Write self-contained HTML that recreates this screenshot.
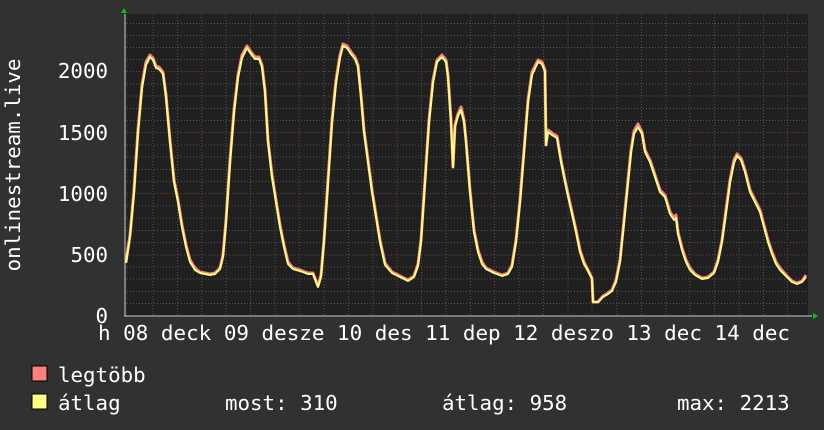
<!DOCTYPE html>
<html><head><meta charset="utf-8"><style>
html,body{margin:0;padding:0;background:#313131;}
body{width:824px;height:430px;overflow:hidden;position:relative;font-family:"DejaVu Sans Mono","Liberation Mono",monospace;color:#fff;}
svg{position:absolute;left:0;top:0}
</style></head><body>
<svg width="824" height="430" xmlns="http://www.w3.org/2000/svg" font-family="DejaVu Sans Mono, Liberation Mono, monospace">
<rect x="124" y="14" width="684" height="302" fill="#202020"/>
<rect x="124" y="14" width="3" height="302" fill="#2a2a2a"/>
<g stroke="#555" stroke-width="1" stroke-dasharray="1,2">
<path d="M153 14V316M177.5 14V316M226 14V316M250.5 14V316M275 14V316M324 14V316M348.5 14V316M373 14V316M421.5 14V316M446 14V316M470.5 14V316M519 14V316M543.5 14V316M568 14V316M617 14V316M641.5 14V316M666 14V316M714.5 14V316M739 14V316M763.5 14V316"/>
<path d="M124 23.5H808M124 35.5H808M124 47.5H808M124 59.5H808M124 84H808M124 96H808M124 108.5H808M124 120.5H808M124 145H808M124 157H808M124 169.5H808M124 181.5H808M124 206H808M124 218H808M124 230.5H808M124 242.5H808M124 267H808M124 279H808M124 291.5H808M124 303.5H808"/>
</g>
<g stroke="#7a3c3c" stroke-width="1" stroke-dasharray="1,2">
<path d="M201.7 14V316M299.3 14V316M397 14V316M494.6 14V316M592 14V316M689.8 14V316M787.4 14V316"/>
<path d="M124 71.5H808M124 132.5H808M124 193.5H808M124 255H808"/>
</g>
<polyline fill="none" stroke="#ff7f7f" stroke-width="3" stroke-linejoin="round" points="126,262 130,235 134,190 138,130 142,85 146,62 150,55 153,58 156,66 159,67 163,72 166,95 170,140 174,180 178,200 182,225 186,245 190,260 195,268 200,272 205,273 210,274 215,273 220,268 223,255 226,220 230,160 234,110 238,75 242,55 247,46 251,52 255,57 259,57 262,65 265,90 268,140 272,175 276,200 280,225 284,245 288,262 293,268 300,270 308,273 313,273 318,286 321,275 324,240 328,180 332,120 336,80 340,55 343,44 347,46 351,52 355,57 358,65 361,95 364,130 368,160 372,190 376,215 380,240 385,263 392,272 400,276 408,280 414,276 418,264 421,240 425,180 429,120 433,80 437,60 442,55 446,60 448,75 451,120 453,167 455,125 458,114 461,107 464,120 466,140 470,190 474,230 478,250 482,262 486,268 494,272 502,275 508,273 512,265 516,240 520,200 524,150 528,100 532,72 538,60 542,62 545,70 546,145 548,130 552,133 557,136 561,160 565,180 568,194 572,212 576,230 580,250 584,262 588,270 592,278 593,302 598,302 603,296 608,293 612,290 616,280 620,260 624,220 628,180 631,150 634,131 638,124 642,132 645,150 650,160 655,175 660,190 665,195 670,212 674,218 676,215 678,232 682,248 686,260 690,268 695,274 702,278 708,277 714,272 718,260 722,240 726,210 730,180 734,160 737,154 741,158 745,170 750,190 755,200 760,210 764,225 768,240 772,252 776,262 780,268 786,275 792,281 797,283 802,281 806,275"/>
<polyline fill="none" stroke="#ffff80" stroke-width="2" stroke-linejoin="round" points="126,263 130,237 134,193 138,133 142,88 146,65 150,57 153,60 156,68 159,69 163,74 166,97 170,142 174,182 178,202 182,227 186,247 190,262 195,270 200,273 205,274 210,275 215,274 220,269 223,257 226,223 230,163 234,113 238,78 242,58 247,48 251,54 255,59 259,59 262,67 265,92 268,142 272,177 276,202 280,227 284,247 288,264 293,269 300,271 308,274 313,274 318,287 321,277 324,242 328,183 332,123 336,83 340,58 343,46 347,48 351,54 355,59 358,67 361,97 364,132 368,162 372,192 376,217 380,242 385,265 392,273 400,277 408,281 414,277 418,266 421,242 425,183 429,123 433,83 437,62 442,57 446,62 448,77 451,122 453,167 455,127 458,116 461,110 464,122 466,142 470,192 474,232 478,252 482,264 486,269 494,273 502,276 508,274 512,267 516,242 520,203 524,153 528,103 532,75 538,62 542,64 545,72 546,145 548,132 552,135 557,138 561,162 565,182 568,196 572,214 576,232 580,252 584,264 588,271 592,279 593,302 598,302 603,297 608,294 612,291 616,282 620,262 624,223 628,183 631,153 634,134 638,127 642,134 645,152 650,162 655,177 660,192 665,197 670,214 674,220 676,218 678,234 682,250 686,262 690,270 695,275 702,279 708,278 714,273 718,262 722,242 726,213 730,183 734,163 737,156 741,160 745,172 750,192 755,202 760,212 764,227 768,242 772,254 776,264 780,270 786,276 792,282 797,284 802,282 806,277"/>
<path d="M124 316H812M125 14V316" stroke="#ccc" stroke-width="1"/>
<polygon points="121,13 127,13 124,8" fill="#00cc00"/>
<polygon points="813,313 813,319 818,316" fill="#00cc00"/>
<g font-size="20.8" fill="#fff" text-anchor="end">
<text x="108" y="78">2000</text>
<text x="108" y="140">1500</text>
<text x="108" y="201">1000</text>
<text x="108" y="262">500</text>
<text x="108" y="323">0</text>
</g>
<text x="98" y="340" font-size="20.8" fill="#fff" textLength="692" lengthAdjust="spacingAndGlyphs">h 08 deck 09 desze 10 des 11 dep 12 deszo 13 dec 14 dec</text>
<text transform="translate(20,165) rotate(-90)" font-size="20.8" fill="#fff" text-anchor="middle">onlinestream.live</text>
<rect x="32" y="366" width="15" height="15" fill="#ff7f7f" stroke="#000" shape-rendering="crispEdges"/>
<rect x="32" y="394" width="15" height="15" fill="#ffff80" stroke="#000" shape-rendering="crispEdges"/>
<g font-size="20.8" fill="#fff">
<text x="58" y="382">legtöbb</text>
<text x="58" y="410">átlag</text>
<text x="225" y="410">most: 310</text>
<text x="442" y="410">átlag: 958</text>
<text x="677" y="410">max: 2213</text>
</g>
</svg>
</body></html>
